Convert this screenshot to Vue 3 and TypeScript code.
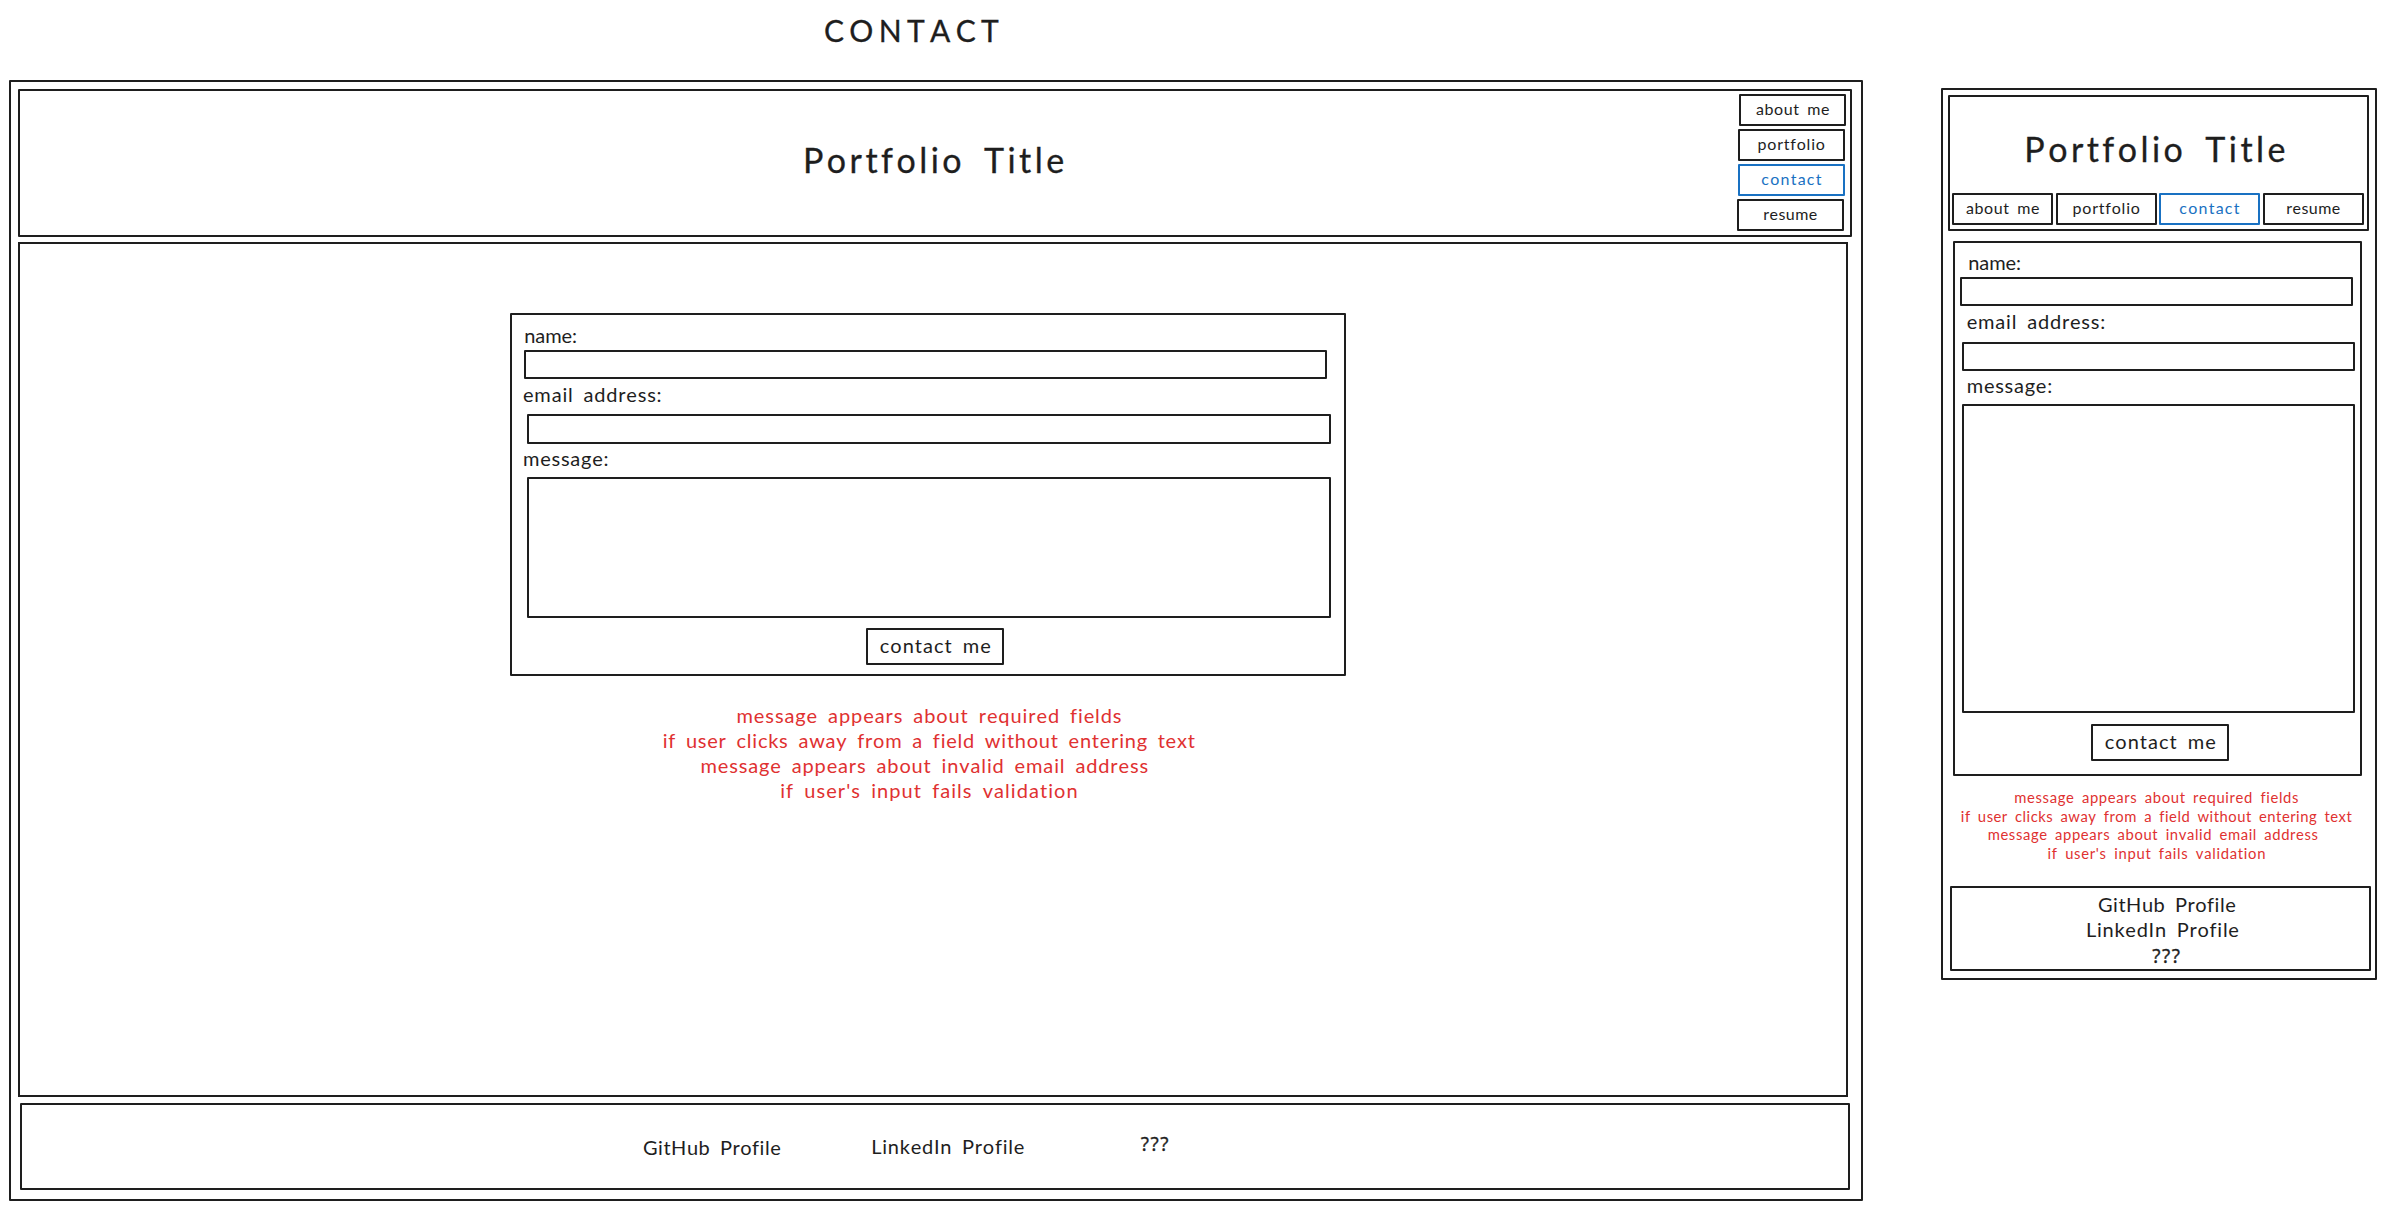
<script setup lang="ts">
import type { Directive } from 'vue'

interface Label {
  text: string
  width: number
}

interface View {
  name: string
  noteScale: number
}

const views: View[] = [
  { name: 'desktop', noteScale: 1 },
  { name: 'mobile', noteScale: 0.7375 },
]

const links: (Label & { key: string })[] = [
  { key: 'about', text: 'about me', width: 73 },
  { key: 'portfolio', text: 'portfolio', width: 66 },
  { key: 'contact', text: 'contact', width: 60.5 },
  { key: 'resume', text: 'resume', width: 52.5 },
]

const fields: (Label & { key: string })[] = [
  { key: 'name', text: 'name:', width: 50.7 },
  { key: 'email', text: 'email address:', width: 137.6 },
  { key: 'message', text: 'message:', width: 83.5 },
]

const notes: Label[] = [
  { text: 'message appears about required fields', width: 383 },
  { text: 'if user clicks away from a field without entering text', width: 530.6 },
  { text: 'message appears about invalid email address', width: 446 },
  { text: "if user's input fails validation", width: 295.5 },
]

const profiles: (Label & { key: string })[] = [
  { key: 'github', text: 'GitHub Profile', width: 136.8 },
  { key: 'linkedin', text: 'LinkedIn Profile', width: 151 },
  { key: 'other', text: '???', width: 27.5 },
]

// Tracks a line of lettering out so that its ink spans the given width.
const vSpan: Directive<HTMLElement, number> = {
  mounted(el, { value }) {
    const text = (el.textContent ?? '').trim()
    const ctx = document.createElement('canvas').getContext('2d')
    if (!ctx) return
    const style = getComputedStyle(el)
    const size = parseFloat(style.fontSize)
    ctx.font = `${style.fontWeight} ${style.fontSize} ${style.fontFamily}`
    ctx.fontKerning = 'none'
    const m = ctx.measureText(text)
    const gaps = text.split(' ').length - 1
    const word = size * 0.2
    const ink = m.actualBoundingBoxRight + m.actualBoundingBoxLeft + gaps * word
    el.style.width = `${value}px`
    el.style.wordSpacing = `${word}px`
    el.style.letterSpacing = `${(value - ink) / (text.length - 1)}px`
    el.style.textIndent = `${m.actualBoundingBoxLeft}px`
  },
}
</script>

<template>
  <div class="board">
    <section v-for="view in views" :key="view.name" :class="view.name">
      <h1 v-if="view.name === 'desktop'" v-span="174" class="ink page-name">CONTACT</h1>
      <div class="frame box">
        <header class="header box">
          <h2 v-span="256.5" class="ink title">Portfolio Title</h2>
          <nav class="nav">
            <a v-for="l in links" :key="l.key" class="link box" :class="l.key">
              <span v-span="l.width" class="ink">{{ l.text }}</span>
            </a>
          </nav>
        </header>
        <main class="main">
          <form class="form box">
            <template v-for="f in fields" :key="f.key">
              <label v-span="f.width" class="ink label" :class="`label-${f.key}`">{{ f.text }}</label>
              <div class="input box" :class="`input-${f.key}`"></div>
            </template>
            <div class="button box"><span v-span="110.5" class="ink">contact me</span></div>
          </form>
          <div class="notes">
            <p v-for="n in notes" :key="n.text" v-span="n.width * view.noteScale" class="ink note">{{ n.text }}</p>
          </div>
        </main>
        <footer class="footer box">
          <span v-for="p in profiles" :key="p.key" v-span="p.width" class="ink" :class="p.key">{{ p.text }}</span>
        </footer>
      </div>
    </section>
  </div>
</template>

<style>
body {
  background: #fff;
}
</style>

<style scoped>
.board {
  display: flex;
  align-items: flex-start;
  width: 2386px;
  height: 1209px;
  overflow: hidden;
  background: #fff;
  color: #1e1e1e;
  font-family: Excalifont, Virgil, Lato, sans-serif;
  font-size: 20px;
  line-height: 24px;
}

.box {
  box-sizing: border-box;
  border: 2px solid #1e1e1e;
  border-radius: 1px;
}

.ink {
  display: block;
  flex: none;
  margin: 0;
  white-space: nowrap;
  font-weight: 400;
  font-kerning: none;
  font-variant-ligatures: none;
}

.page-name {
  margin: 11.4px 0 30.6px 816px;
  font-size: 30px;
  line-height: 38px;
  -webkit-text-stroke: 0.3px currentColor;
}

.title {
  font-size: 34px;
  line-height: 44px;
  -webkit-text-stroke: 0.3px currentColor;
}

.link {
  display: flex;
  justify-content: center;
  align-items: flex-start;
  height: 32px;
  padding-top: 3px;
  font-size: 16px;
  line-height: 20px;
}

.link.contact {
  border-color: #1971c2;
  color: #1971c2;
}

.button {
  display: flex;
  justify-content: center;
  align-items: flex-start;
  width: 138px;
  height: 37px;
  padding-top: 3px;
}

.form {
  display: flex;
  flex-direction: column;
  align-items: flex-start;
}

.input {
  flex: none;
}

.notes {
  display: flex;
  flex-direction: column;
  align-items: center;
  color: #e03131;
}

.note:nth-child(3) {
  margin-right: 0.46em;
}

.footer {
  display: flex;
  align-items: flex-start;
}

.other {
  font-family: Excalifont, Virgil, "Noto Sans", sans-serif;
  font-size: 19px;
  -webkit-text-stroke: 0.3px currentColor;
}

/* Wide layout */
.desktop {
  width: 1854px;
  margin-left: 9px;
}

.desktop .frame {
  height: 1121px;
  padding: 7px 0 0 7px;
}

.desktop .header {
  display: flex;
  align-items: flex-start;
  width: 1834px;
  height: 148px;
}

.desktop .title {
  margin: 47px 2.5px 0 786px;
}

.desktop .nav {
  display: flex;
  flex-direction: column;
  gap: 3px;
  margin: 3px 0 0 672px;
}

.desktop .link {
  width: 107px;
}

.desktop .link.about {
  margin-left: 2px;
}

.desktop .link.portfolio,
.desktop .link.contact {
  margin-left: 1px;
}

.desktop .main {
  box-sizing: border-box;
  width: 1830px;
  height: 855px;
  margin-top: 5px;
  padding-top: 69px;
  border: 2px solid #1e1e1e;
}

.desktop .form {
  width: 836px;
  height: 363px;
  margin-left: 490px;
}

.desktop .label-name {
  margin: 8px 0 3px 13.3px;
}

.desktop .label-email {
  margin: 3px 0 8px 11px;
}

.desktop .label-message {
  margin: 2px 0 7px 12px;
}

.desktop .input {
  width: 803px;
  height: 29px;
  margin-left: 12px;
}

.desktop .input-email {
  width: 804px;
  height: 30px;
  margin-left: 15px;
}

.desktop .input-message {
  width: 804px;
  height: 141px;
  margin-left: 15px;
}

.desktop .button {
  margin: 10px 0 0 354px;
}

.desktop .notes {
  margin: 27.5px 8px 0 0;
  line-height: 25px;
}

.desktop .footer {
  width: 1830px;
  height: 87px;
  margin: 6px 0 0 2px;
}

.desktop .github {
  margin: 29.6px 0 0 621px;
}

.desktop .linkedin {
  margin: 29px 0 0 92.5px;
}

.desktop .other {
  margin: 27px 0 0 117.4px;
}

/* Narrow layout */
.mobile {
  width: 436px;
  margin: 88px 0 0 78px;
}

.mobile .frame {
  height: 892px;
  padding: 5px 0 0 5px;
}

.mobile .header {
  width: 421px;
  height: 136px;
}

.mobile .title {
  margin: 30px 0 22px 77.3px;
}

.mobile .nav {
  display: flex;
  gap: 3px;
  margin-left: 2px;
}

.mobile .link {
  width: 101px;
}

.mobile .link.contact {
  margin-left: -1px;
}

.mobile .main {
  box-sizing: border-box;
  height: 655px;
  padding-top: 10px;
}

.mobile .form {
  width: 409px;
  height: 535px;
  margin-left: 5px;
}

.mobile .label-name {
  margin: 7px 0 3px 14.3px;
}

.mobile .label-email {
  margin: 3px 0 9px 11.7px;
}

.mobile .label-message {
  margin: 2px 0 7px 12.7px;
}

.mobile .input {
  width: 393px;
  height: 29px;
  margin-left: 7px;
}

.mobile .input-name {
  margin-left: 5px;
}

.mobile .input-message {
  height: 309px;
}

.mobile .button {
  margin: 11px 0 0 136px;
}

.mobile .notes {
  margin: 12px 10px 0 0;
  font-size: 14.8px;
  line-height: 18.5px;
}

.mobile .footer {
  flex-direction: column;
  width: 421px;
  height: 85px;
  margin-left: 2px;
  padding-top: 4px;
}

.mobile .github {
  margin-left: 146px;
}

.mobile .linkedin {
  margin: 1px 0 0 135px;
}

.mobile .other {
  margin: 3px 0 0 200.3px;
}
</style>
